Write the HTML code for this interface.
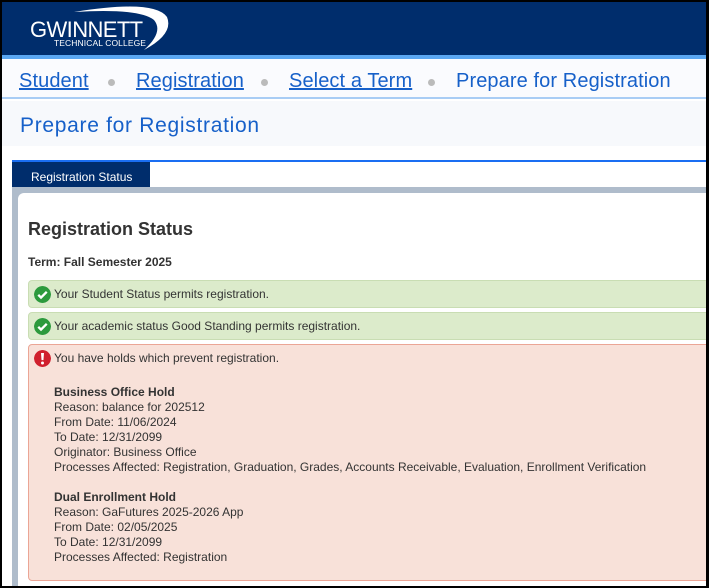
<!DOCTYPE html>
<html><head><meta charset="utf-8"><style>
*{margin:0;padding:0;box-sizing:border-box}
body{width:709px;height:588px;overflow:hidden;background:#000;font-family:"Liberation Sans",Arial,sans-serif;position:relative}
#page{position:absolute;left:2px;top:2px;width:704px;height:584px;background:#fff;overflow:hidden}
.hdr{position:absolute;left:0;top:0;width:704px;height:53px;background:#002d6c}
.stripe{position:absolute;left:0;top:53px;width:704px;height:4px;background:#5aa6f0}
.bc{position:absolute;left:0;top:57px;width:704px;height:40px;background:#fafbfe;border-bottom:2px solid #a9cdf5;font-size:20px;letter-spacing:0.1px;color:#1660c9;white-space:nowrap}
.bc span{position:absolute;top:11px}
.bc a{color:#1660c9;text-decoration:underline}
.dot{width:7px;height:7px;border-radius:50%;background:#bbb;position:absolute;top:20px}
.title{position:absolute;left:0;top:99px;width:704px;height:45px;background:#f7f9fc;font-size:21px;letter-spacing:0.7px;color:#1660c9;padding:13px 0 0 18px}
.tabline{position:absolute;left:10px;top:158px;width:694px;height:2px;background:#1a6ef2}
.tab{position:absolute;left:10px;top:158px;width:138px;height:27px;background:#002d6c;border-top:2px solid #1a6ef2;color:#fff;font-size:12px;padding:8px 0 0 19px}
.band{position:absolute;left:10px;top:185px;width:694px;height:400px;background:#afbccb}
.panel{position:absolute;left:16px;top:191px;width:690px;height:400px;background:#fff;border-radius:6px 0 0 0}
h2{position:absolute;left:10px;top:26px;font-size:18px;color:#333;font-weight:bold}
.term{position:absolute;left:10px;top:62px;font-size:12px;font-weight:bold;color:#333}
.msg{position:absolute;left:10px;width:690px;border-radius:4px;font-size:12px;color:#333}
.ok{background:#dcebcb;border:1px solid #c9ddb3;height:28px}
.err{background:#f8e1d9;border:1px solid #eba595;height:237px}
.ic{position:absolute;left:5px;top:5px;width:17px;height:17px;border-radius:50%}
.msg .t{position:absolute;left:25px;top:6px}
.hold{position:absolute;left:25px;line-height:15px}
</style></head><body><div id="page">
<div class="hdr">
<svg width="180" height="53" style="position:absolute;left:0;top:0">
<path d="M72 10 Q152 -3 165 15 Q172 32 142 48 Q162 30 152 18 Q137 6 72 10Z" fill="#fff"/>
<text x="28" y="35" font-family="Liberation Sans" font-size="22" fill="#fff" letter-spacing="-0.6">GWINNETT</text>
<text x="52" y="44" font-family="Liberation Sans" font-size="8.5" fill="#fff" letter-spacing="0.1">TECHNICAL COLLEGE</text>
</svg></div>
<div class="stripe"></div>
<div class="bc">
<span style="left:17px"><a>Student</a></span><div class="dot" style="left:106px"></div>
<span style="left:134px"><a>Registration</a></span><div class="dot" style="left:259px"></div>
<span style="left:287px"><a>Select a Term</a></span><div class="dot" style="left:426px"></div>
<span style="left:454px">Prepare for Registration</span>
</div>
<div class="title">Prepare for Registration</div>
<div class="tabline"></div>
<div class="tab">Registration Status</div>
<div class="band"></div>
<div class="panel">
<h2>Registration Status</h2>
<div class="term">Term: Fall Semester 2025</div>
<div class="msg ok" style="top:87px"><svg class="ic" viewBox="0 0 16 16"><circle cx="8" cy="8" r="8" fill="#2c9a3d"/><path d="M4 8.3l2.6 2.6L12 5.5" stroke="#fff" stroke-width="2.2" fill="none"/></svg><span class="t">Your Student Status permits registration.</span></div>
<div class="msg ok" style="top:119px"><svg class="ic" viewBox="0 0 16 16"><circle cx="8" cy="8" r="8" fill="#2c9a3d"/><path d="M4 8.3l2.6 2.6L12 5.5" stroke="#fff" stroke-width="2.2" fill="none"/></svg><span class="t">Your academic status Good Standing permits registration.</span></div>
<div class="msg err" style="top:151px"><svg class="ic" viewBox="0 0 16 16"><circle cx="8" cy="8" r="8" fill="#d0202e"/><path d="M6.6 2.8h2.8l-0.5 6.7h-1.8z" fill="#fff"/><circle cx="8" cy="12.2" r="1.4" fill="#fff"/></svg><span class="t">You have holds which prevent registration.</span>
<div class="hold" style="top:40px"><b>Business Office Hold</b><br>Reason: balance for 202512<br>From Date: 11/06/2024<br>To Date: 12/31/2099<br>Originator: Business Office<br>Processes Affected: Registration, Graduation, Grades, Accounts Receivable, Evaluation, Enrollment Verification</div>
<div class="hold" style="top:145px"><b>Dual Enrollment Hold</b><br>Reason: GaFutures 2025-2026 App<br>From Date: 02/05/2025<br>To Date: 12/31/2099<br>Processes Affected: Registration</div>
</div>
</div>
</div></body></html>
